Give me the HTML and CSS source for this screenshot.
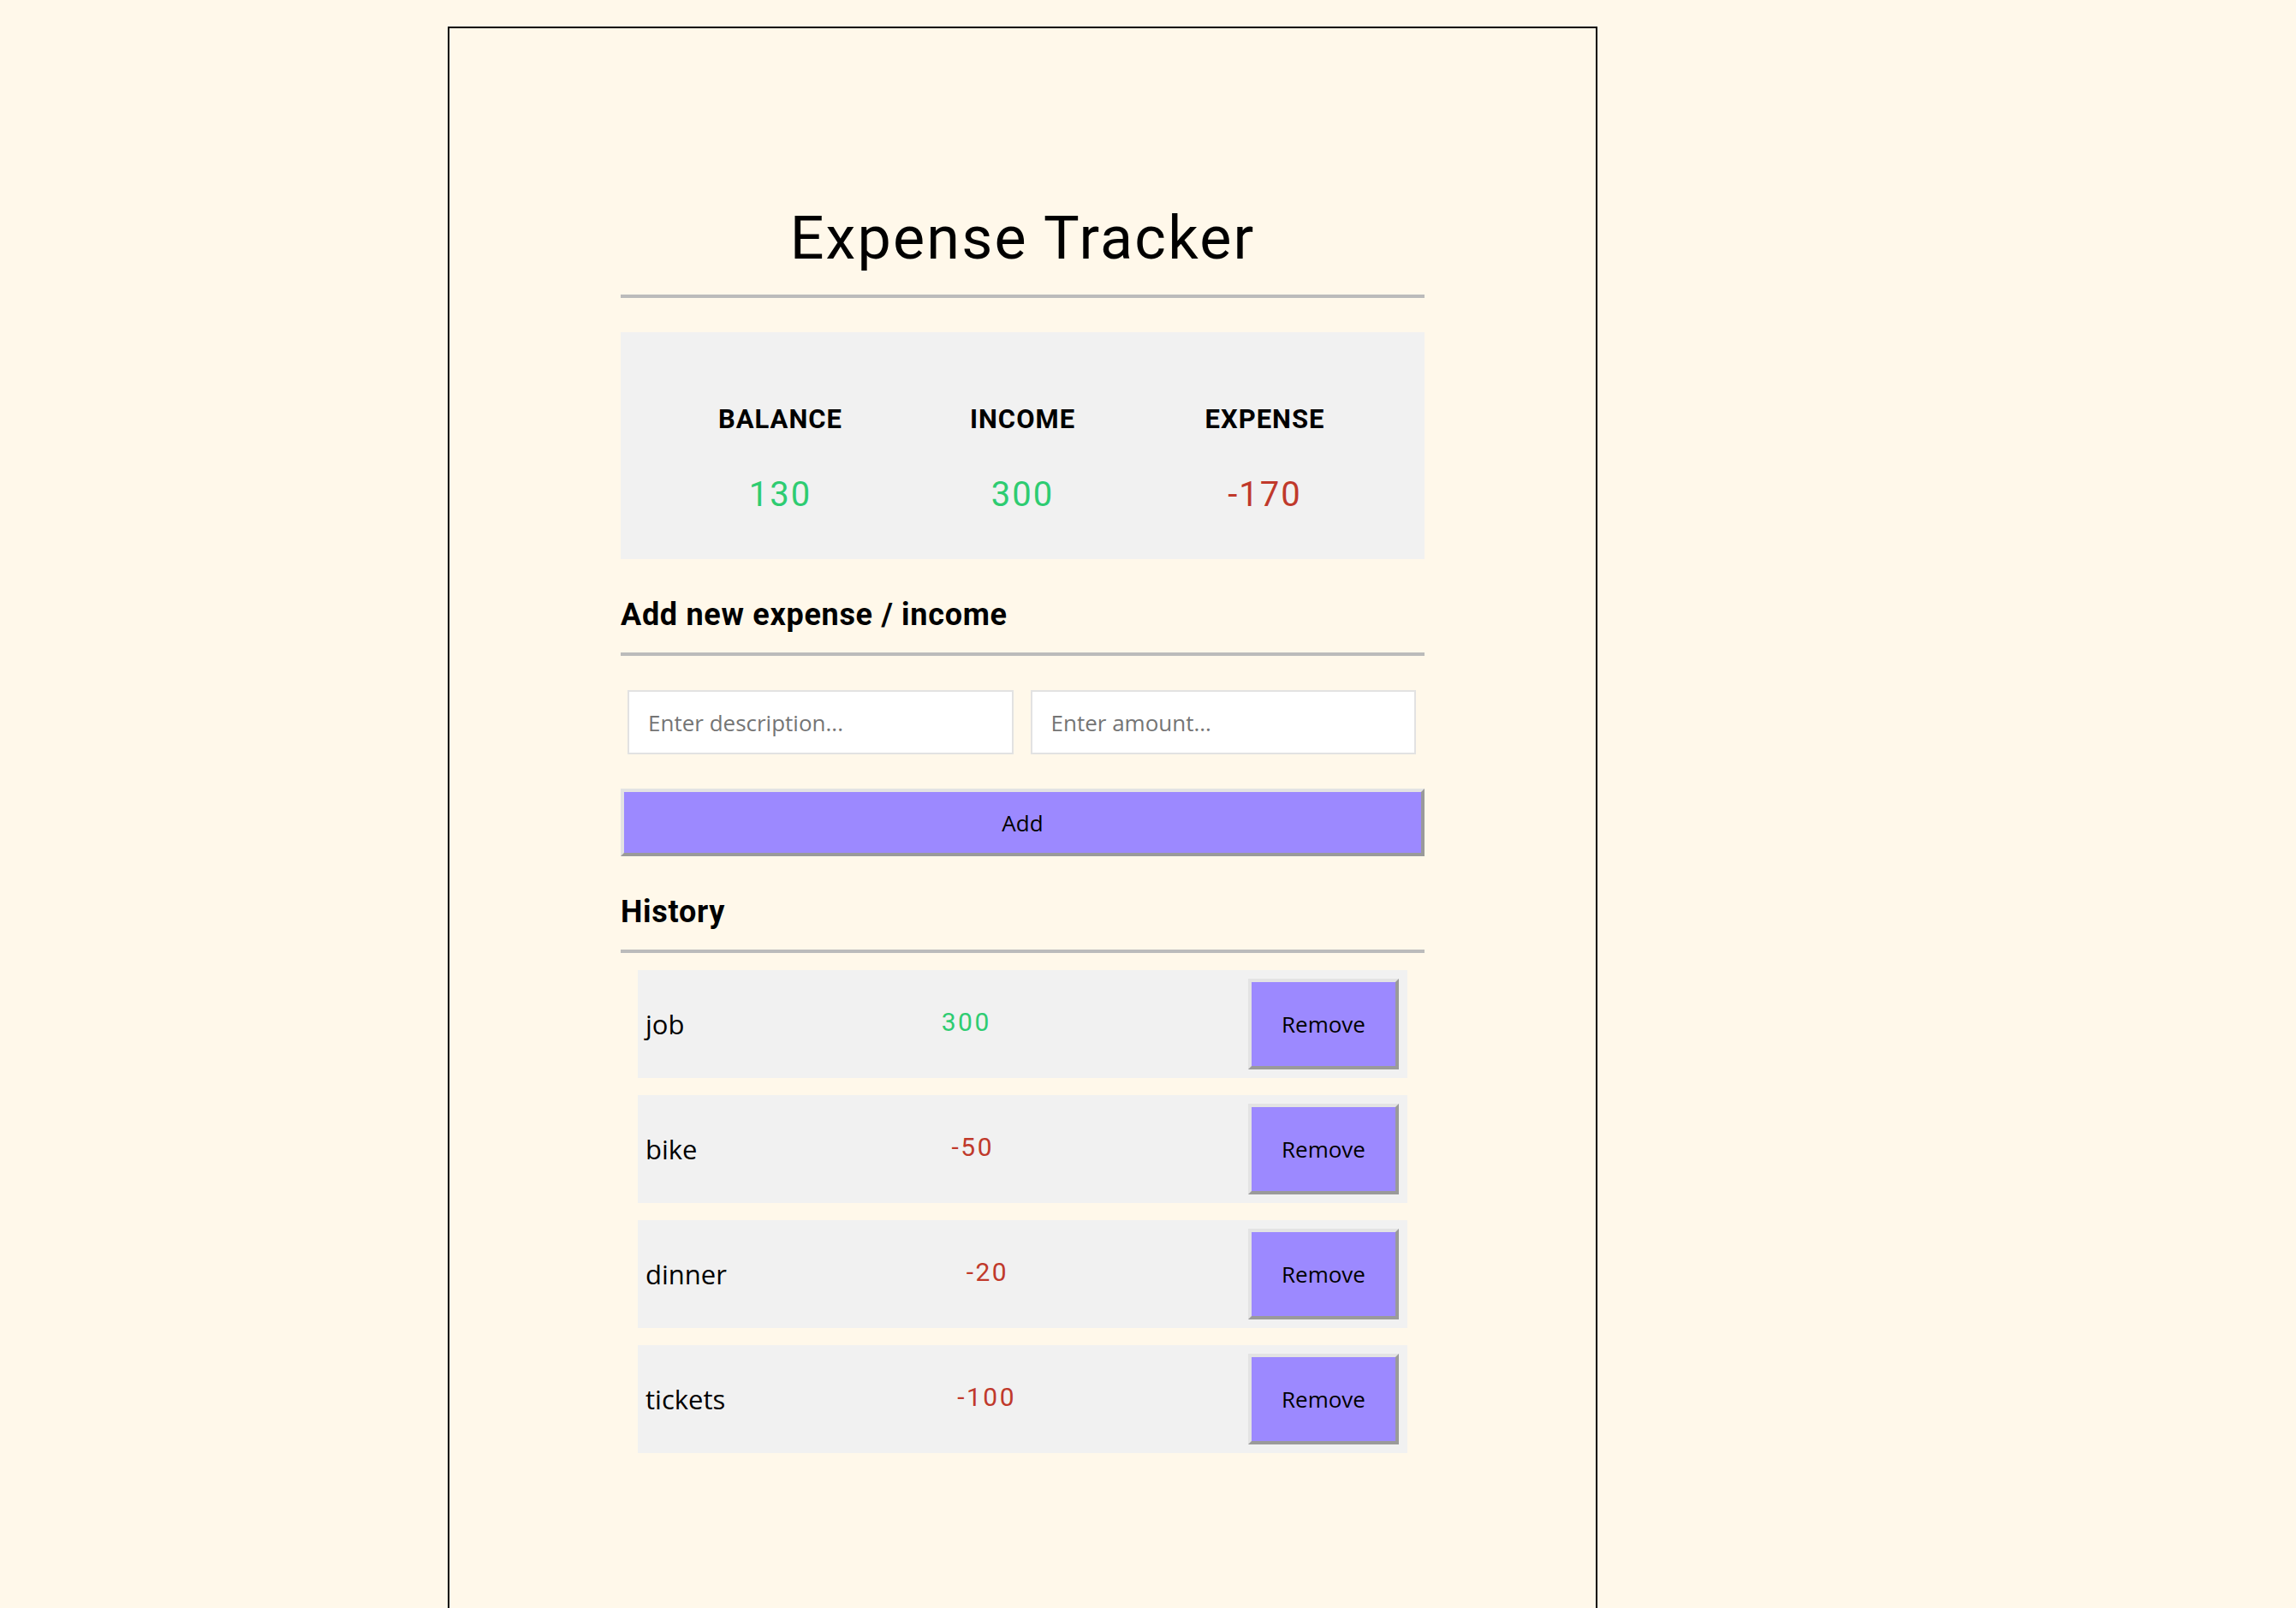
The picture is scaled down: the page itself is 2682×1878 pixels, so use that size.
FILE: index.html
```html
<!DOCTYPE html>
<html lang="en">
<head>
<meta charset="utf-8">
<title>Expense Tracker</title>
<link rel="stylesheet" href="styles.css">
</head>
<body>
<div class="frame">
  <div class="app">
    <h1 class="title">Expense Tracker</h1>
    <hr class="rule">
    <div class="summary">
      <div class="stat">
        <div class="stat-label">BALANCE</div>
        <div class="stat-value plus">130</div>
      </div>
      <div class="stat">
        <div class="stat-label">INCOME</div>
        <div class="stat-value plus">300</div>
      </div>
      <div class="stat">
        <div class="stat-label">EXPENSE</div>
        <div class="stat-value minus">-170</div>
      </div>
    </div>
    <h3 class="section-title">Add new expense / income</h3>
    <hr class="rule">
    <div class="inputs">
      <input class="field" type="text" placeholder="Enter description...">
      <input class="field" type="text" placeholder="Enter amount...">
    </div>
    <button class="btn btn-add">Add</button>
    <h3 class="section-title">History</h3>
    <hr class="rule">
    <ul class="history">
      <li class="item"><span class="desc">job</span><span class="amount plus">300</span><button class="btn btn-remove">Remove</button></li>
      <li class="item"><span class="desc">bike</span><span class="amount minus">-50</span><button class="btn btn-remove">Remove</button></li>
      <li class="item"><span class="desc">dinner</span><span class="amount minus">-20</span><button class="btn btn-remove">Remove</button></li>
      <li class="item"><span class="desc">tickets</span><span class="amount minus">-100</span><button class="btn btn-remove">Remove</button></li>
    </ul>
  </div>
</div>
</body>
</html>
```
FILE: styles.css
```css
html, body {
  background: #fff8ea;
}
body {
  margin: 8px;
  font-family: Roboto, "Liberation Sans", sans-serif;
  color: #000;
}
.frame {
  margin: 23px 0 0 515px;
  width: 1343px;
  height: 1900px;
  border: 2px solid #000;
  padding: 0 200px;
  box-sizing: border-box;
}
.app {
  width: 939px;
}
.title {
  margin: 204px 0 25px;
  font-size: 70px;
  font-weight: 400;
  line-height: 82px;
  letter-spacing: 2.2px;
  text-align: center;
}
.rule {
  margin: 0;
  height: 4px;
  border: 0;
  background: #bbbbbb;
}
.summary {
  margin-top: 40px;
  height: 265px;
  box-sizing: border-box;
  padding: 84px 45px 0;
  background: #f1f1f1;
  display: grid;
  grid-template-columns: 1fr 1fr 1fr;
}
.stat {
  text-align: center;
}
.stat-label {
  font-size: 31px;
  font-weight: 700;
  line-height: 36px;
  letter-spacing: 1px;
}
.stat-value {
  margin-top: 46px;
  font-size: 40px;
  line-height: 48px;
  letter-spacing: 2px;
}
.plus { color: #2ecc71; }
.minus { color: #c0392b; }
.section-title {
  margin: 44px 0 23px;
  font-size: 36px;
  font-weight: 700;
  line-height: 42px;
  letter-spacing: 0.7px;
}
.inputs {
  display: flex;
  gap: 20px;
  padding: 0 10px 0 8px;
  margin-top: 40px;
}
.field {
  flex: 1;
  min-width: 0;
  height: 75px;
  box-sizing: border-box;
  border: 2px solid #e2e2e2;
  background: #fff;
  padding: 0 22px;
  font-family: "Open Sans", sans-serif;
  font-size: 26px;
  color: #000;
  outline: none;
}
.field::placeholder {
  color: #757575;
}
.btn {
  background: #9c89ff;
  border-style: solid;
  border-width: 4px;
  border-color: #e3e3e3 #9a9a9a #9a9a9a #e3e3e3;
  font-family: "Open Sans", sans-serif;
  font-size: 26px;
  color: #000;
  padding: 0;
  cursor: pointer;
}
.btn-add {
  display: block;
  width: 100%;
  height: 79px;
  margin-top: 40px;
}
.history {
  list-style: none;
  margin: 20px 20px 0;
  padding: 0;
  display: flex;
  flex-direction: column;
  gap: 20px;
}
.item {
  height: 126px;
  box-sizing: border-box;
  padding: 10px 10px 10px 9px;
  background: #f1f1f1;
  display: flex;
  align-items: center;
  justify-content: space-between;
}
.desc {
  font-family: "Open Sans", sans-serif;
  font-size: 31px;
}
.amount {
  font-size: 30px;
  letter-spacing: 2.5px;
  position: relative;
  top: -3px;
}
.btn-remove {
  width: 176px;
  height: 106px;
}
```
